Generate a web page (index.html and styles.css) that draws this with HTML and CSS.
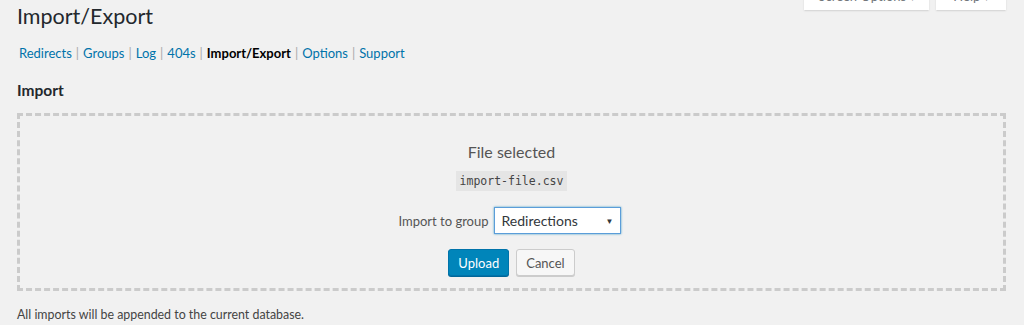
FILE: index.html
```html
<!DOCTYPE html>
<html lang="en">
<head>
    <meta charset="UTF-8">
    <meta name="viewport" content="width=device-width, initial-scale=1.0">
    <title>Import/Export</title>
    <link rel="stylesheet" href="styles.css">
</head>
<body>

    <div class="wrap">
        <div class="page-header">
            <h1>Import/Export</h1>
            <div class="screen-meta-links">
                <button class="meta-tab wide">Screen Options <span class="arrow">&#9662;</span></button>
                <button class="meta-tab">Help <span class="arrow">&#9662;</span></button>
            </div>
        </div>

        <ul class="subsubsub">
            <li><a href="#">Redirects</a><span class="sep">|</span></li>
            <li><a href="#">Groups</a><span class="sep">|</span></li>
            <li><a href="#">Log</a><span class="sep">|</span></li>
            <li><a href="#">404s</a><span class="sep">|</span></li>
            <li><a href="#" class="current">Import/Export</a><span class="sep">|</span></li>
            <li><a href="#">Options</a><span class="sep">|</span></li>
            <li><a href="#">Support</a></li>
        </ul>

        <h2>Import</h2>

        <div class="dropzone">
            <h3>File selected</h3>
            <p><code>import-file.csv</code></p>
            <div class="group-row">
                <label for="group">Import to group</label>
                <div class="select">
                    <span>Redirections</span>
                    <span class="caret">&#9660;</span>
                </div>
            </div>
            <div class="actions">
                <button class="button-primary">Upload</button>
                <button class="button">Cancel</button>
            </div>
        </div>

        <p class="note">All imports will be appended to the current database.</p>
    </div>

</body>
</html>
```

FILE: styles.css
```css
body {
    font-family: Lato, "Noto Sans", sans-serif;
    font-size: 13px;
    color: #444;
    margin: 0;
    padding: 0;
    background-color: #f1f1f1;
}

.wrap {
    padding: 0 18px 0 17px;
}

.page-header {
    display: flex;
    justify-content: space-between;
    align-items: flex-start;
}

h1 {
    font-size: 21.5px;
    font-weight: 400;
    line-height: 29px;
    color: #23282d;
    margin: 0;
    padding-top: 2px;
}

.screen-meta-links {
    display: flex;
    gap: 7px;
    margin-top: -18px;
}

.meta-tab {
    font-family: inherit;
    font-size: 13px;
    color: #72777c;
    background: #fff;
    border: none;
    height: 28px;
    width: 70px;
    padding: 0;
    box-shadow: 0 1px 1px -1px rgba(0, 0, 0, 0.2), 0 1px 2px rgba(0, 0, 0, 0.1);
}

.meta-tab.wide {
    width: 125px;
}

.arrow {
    font-size: 10px;
}

.subsubsub {
    list-style: none;
    margin: 12px 0 0 2px;
    padding: 0;
    display: flex;
    color: #aaa;
    line-height: 20px;
}

.subsubsub .sep {
    margin: 0 4px;
}

.subsubsub a {
    color: #0073aa;
    text-decoration: none;
}

.subsubsub a.current {
    color: #000;
    font-weight: 700;
}

h2 {
    font-size: 15.5px;
    font-weight: 700;
    color: #23282d;
    margin: 17px 0 0;
    line-height: 20px;
}

.dropzone {
    border: 3px dashed #cbcbcb;
    margin-top: 13px;
    display: flex;
    flex-direction: column;
    align-items: center;
    box-sizing: border-box;
    height: 178px;
}

.dropzone h3 {
    font-size: 16px;
    font-weight: 400;
    color: #555;
    margin: 25px 0 0;
    line-height: 22px;
}

.dropzone p {
    margin: 9px 0 0;
}

code {
    font-family: "DejaVu Sans Mono", monospace;
    font-size: 11.5px;
    background: #e5e5e5;
    color: #444;
    padding: 3px 4px;
}

.group-row {
    display: flex;
    align-items: center;
    gap: 5px;
    margin-top: 19px;
    margin-left: -4px;
}

.group-row label {
    color: #555;
}

.select {
    width: 127px;
    height: 27px;
    box-sizing: border-box;
    background: #fff;
    border: 1px solid #5b9dd9;
    box-shadow: 0 0 2px rgba(30, 140, 190, 0.8);
    display: flex;
    align-items: center;
    justify-content: space-between;
    padding: 0 6px 0 7px;
    font-size: 14px;
    color: #32373c;
}

.caret {
    font-size: 8px;
    color: #32373c;
}

.actions {
    display: flex;
    gap: 7px;
    margin-top: 15px;
}

.actions button {
    font-family: inherit;
    font-size: 13px;
    height: 27px;
    padding: 0 9px;
    border-radius: 3px;
    cursor: pointer;
}

.button-primary {
    background: #0085ba;
    border: 1px solid #0073aa;
    color: #fff;
    box-shadow: 0 1px 0 #006799;
}

.button {
    background: #f7f7f7;
    border: 1px solid #ccc;
    color: #555;
    box-shadow: 0 1px 0 #ccc;
}

.note {
    margin: 16px 0 0;
    font-size: 12.4px;
}
```
